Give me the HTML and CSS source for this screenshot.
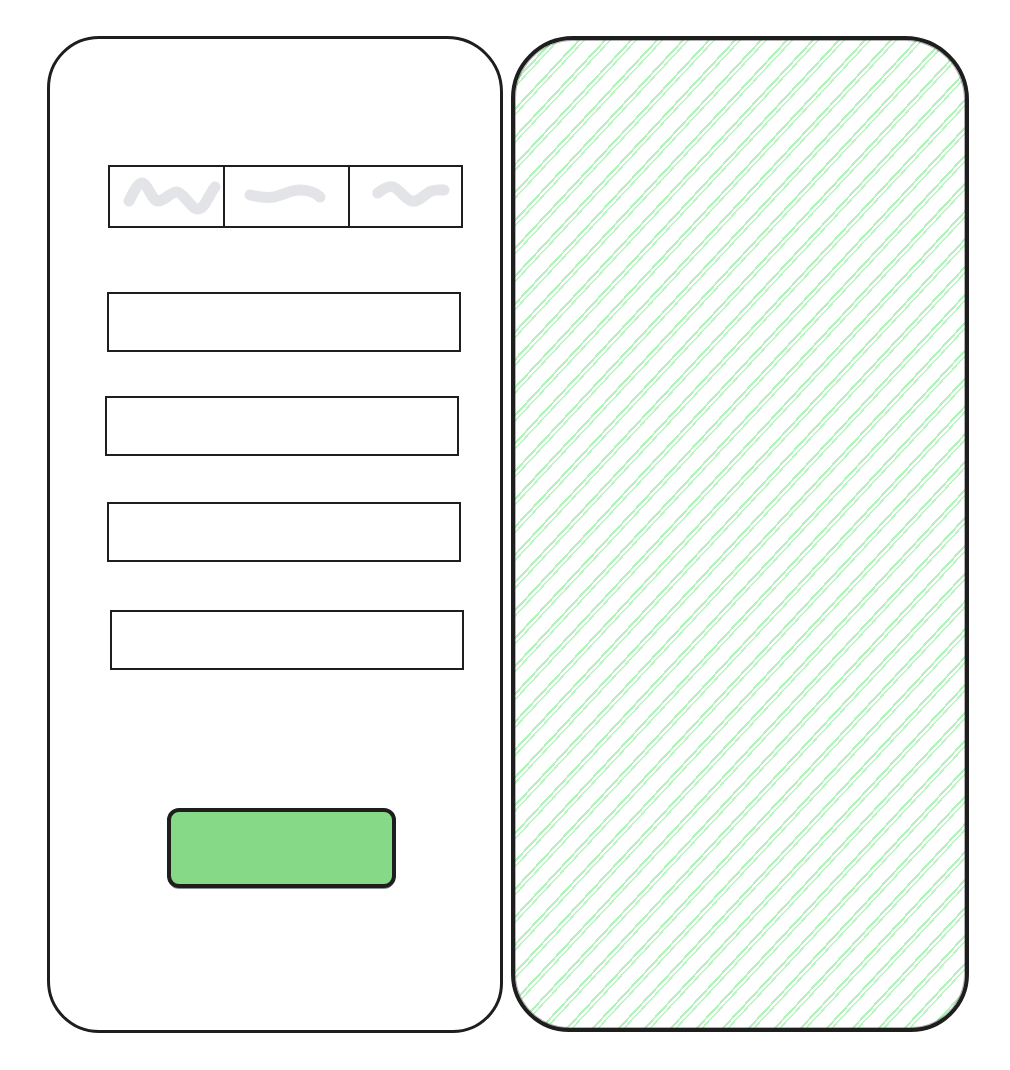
FILE: index.html
```html
<!DOCTYPE html>
<html>
<head>
<meta charset="utf-8">
<link rel="stylesheet" href="styles.css">
</head>
<body>
<div class="board">
  <div class="panel form-panel">
    <div class="tabs">
      <div class="tab tab-a">
        <svg viewBox="0 0 113 59" class="squiggle"><path d="M19 34 C24 24 28 16 32 16 C38 17 42 34 48 34 C55 34 60 25 67 25 C74 26 81 42 88 42 C95 42 99 27 105 20"/></svg>
      </div>
      <div class="tab tab-b">
        <svg viewBox="0 0 123 59" class="squiggle"><path d="M25 28 C33 30 41 31 49 30 C58 28 66 23 74 23 C82 23 90 25 95 30"/></svg>
      </div>
      <div class="tab tab-c">
        <svg viewBox="0 0 112 59" class="squiggle"><path d="M28 26 C33 22 39 18 44 20 C50 22 55 32 62 34 C69 36 75 27 82 24 C87 22 91 23 95 23"/></svg>
      </div>
    </div>
    <div class="field f1"></div>
    <div class="field f2"></div>
    <div class="field f3"></div>
    <div class="field f4"></div>
    <div class="button-row"><div class="cta"></div></div>
  </div>
  <div class="panel hatch-panel"></div>
</div>
</body>
</html>
```

FILE: styles.css
```css
html, body {
  margin: 0;
  padding: 0;
  background: #ffffff;
}
.board {
  display: flex;
  gap: 8px;
  padding: 36px 0 0 47px;
}
.panel {
  box-sizing: border-box;
  border: 3px solid #1e1e1e;
}
.form-panel {
  width: 456px;
  height: 997px;
  border-radius: 52px 56px 50px 52px;
  padding: 126px 0 0 58px;
  display: flex;
  flex-direction: column;
}
.hatch-panel {
  width: 458px;
  height: 996px;
  border-width: 4px;
  border-radius: 62px 64px 58px 58px;
  background-color: #ffffff;
  background-image:
    repeating-linear-gradient(133deg,
      rgba(178, 242, 187, 0) 0px,
      rgba(178, 242, 187, 0) 8px,
      #b2f2bb 8px,
      #b2f2bb 10px,
      rgba(178, 242, 187, 0) 10px,
      rgba(178, 242, 187, 0) 12px,
      rgba(178, 242, 187, 0.85) 12px,
      rgba(178, 242, 187, 0.85) 13.6px,
      rgba(178, 242, 187, 0) 13.6px,
      rgba(178, 242, 187, 0) 19px);
  box-shadow: inset 0 0 0 1px rgba(30,30,30,0.35);
}
.tabs {
  box-sizing: border-box;
  width: 355px;
  height: 63px;
  border: 2px solid #1e1e1e;
  display: flex;
}
.tab {
  height: 100%;
  display: flex;
}
.tab-a { width: 113px; border-right: 2px solid #1e1e1e; }
.tab-b { width: 123px; border-right: 2px solid #1e1e1e; }
.tab-c { flex: 1; }
.squiggle {
  width: 100%;
  height: 100%;
}
.squiggle path {
  fill: none;
  stroke: #e3e4e7;
  stroke-width: 11;
  stroke-linecap: round;
  stroke-linejoin: round;
}
.field {
  box-sizing: border-box;
  width: 354px;
  height: 60px;
  border: 2px solid #1e1e1e;
}
.f1 { margin-top: 64px; margin-left: -1px; }
.f2 { margin-top: 44px; margin-left: -3px; }
.f3 { margin-top: 46px; margin-left: -1px; }
.f4 { margin-top: 48px; margin-left: 2px; }
.button-row {
  margin-top: 138px;
  padding-left: 59px;
}
.cta {
  box-sizing: border-box;
  width: 229px;
  height: 80px;
  background: #86d987;
  border: 4px solid #1e1e1e;
  border-radius: 12px;
  box-shadow: 0 2px 0 -1px rgba(30,30,30,0.5);
}
```
